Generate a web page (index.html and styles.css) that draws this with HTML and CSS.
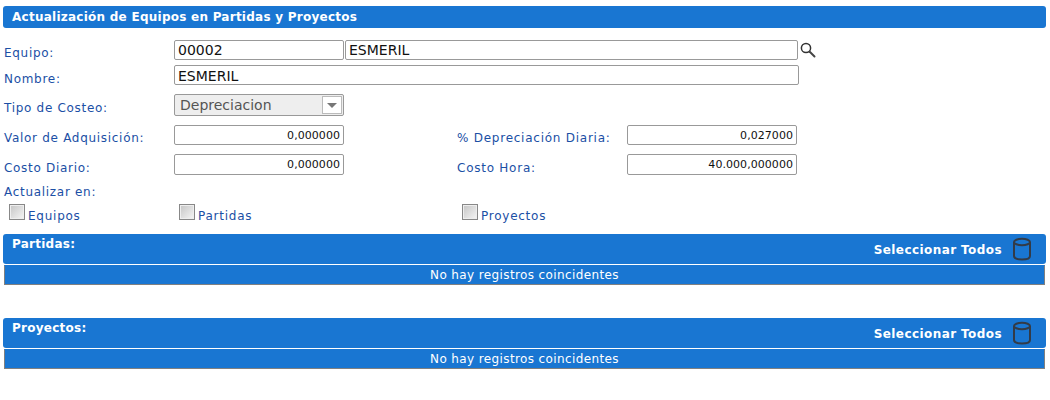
FILE: index.html
```html
<!DOCTYPE html>
<html lang="es">
<head>
    <meta charset="UTF-8">
    <title>Actualización de Equipos</title>
    <link rel="stylesheet" href="styles.css">
</head>
<body>
    <div class="titulo">Actualización de Equipos en Partidas y Proyectos</div>

    <div class="fila fila-equipo">
        <label class="etiqueta">Equipo:</label>
        <input class="campo campo-codigo" type="text" value="00002">
        <input class="campo campo-desc" type="text" value="ESMERIL">
        <svg class="lupa" width="18" height="18" viewBox="0 0 18 18">
            <circle cx="7" cy="7" r="4.6" fill="none" stroke="#333" stroke-width="1.5"/>
            <path d="M10.5 10.5 L15.5 15.5" stroke="#444" stroke-width="2" stroke-linecap="round"/>
        </svg>
    </div>

    <div class="fila fila-nombre">
        <label class="etiqueta">Nombre:</label>
        <input class="campo campo-nombre" type="text" value="ESMERIL">
    </div>

    <div class="fila fila-tipo">
        <label class="etiqueta">Tipo de Costeo:</label>
        <div class="combo">
            <span class="combo-texto">Depreciacion</span>
            <span class="combo-boton"><span class="flecha"></span></span>
        </div>
    </div>

    <div class="fila fila-valor">
        <label class="etiqueta">Valor de Adquisición:</label>
        <input class="campo campo-num" type="text" value="0,000000">
        <label class="etiqueta-der">% Depreciación Diaria:</label>
        <input class="campo campo-num" type="text" value="0,027000">
    </div>

    <div class="fila fila-costo">
        <label class="etiqueta">Costo Diario:</label>
        <input class="campo campo-num" type="text" value="0,000000">
        <label class="etiqueta-der">Costo Hora:</label>
        <input class="campo campo-num" type="text" value="40.000,000000">
    </div>

    <div class="actualizar">Actualizar en:</div>
    <div class="checks">
        <div class="check check-equipos"><span class="caja"></span>Equipos</div>
        <div class="check check-partidas"><span class="caja"></span>Partidas</div>
        <div class="check"><span class="caja"></span>Proyectos</div>
    </div>

    <div class="seccion">
        <span class="seccion-titulo">Partidas:</span>
        <span class="seleccionar">Seleccionar Todos</span>
        <svg class="cilindro" width="20" height="24" viewBox="0 0 20 24">
            <ellipse cx="10" cy="5" rx="8" ry="3.2" fill="none" stroke="#333b47" stroke-width="2"/>
            <path d="M2 5 V19 C2 21 5 22.5 10 22.5 C15 22.5 18 21 18 19 V5" fill="none" stroke="#333b47" stroke-width="2"/>
        </svg>
    </div>
    <div class="vacio">No hay registros coincidentes</div>

    <div class="seccion seccion-proyectos">
        <span class="seccion-titulo">Proyectos:</span>
        <span class="seleccionar">Seleccionar Todos</span>
        <svg class="cilindro" width="20" height="24" viewBox="0 0 20 24">
            <ellipse cx="10" cy="5" rx="8" ry="3.2" fill="none" stroke="#333b47" stroke-width="2"/>
            <path d="M2 5 V19 C2 21 5 22.5 10 22.5 C15 22.5 18 21 18 19 V5" fill="none" stroke="#333b47" stroke-width="2"/>
        </svg>
    </div>
    <div class="vacio">No hay registros coincidentes</div>
</body>
</html>
```

FILE: styles.css
```css
body {
    margin: 0;
    padding: 6px 4px 0 3px;
    font-family: "DejaVu Sans", Verdana, sans-serif;
    font-size: 12px;
    color: #1b4fa5;
    background-color: white;
}

.titulo {
    height: 22px;
    line-height: 23px;
    padding-left: 9px;
    background-color: #1976d2;
    border-radius: 3px;
    color: white;
    font-weight: bold;
    font-size: 12px;
    letter-spacing: 0.25px;
}

.fila {
    display: flex;
    align-items: center;
    padding-left: 1px;
}

.fila-equipo { margin-top: 12px; height: 20px; }
.fila-nombre { margin-top: 5px; height: 20px; }
.fila-tipo { margin-top: 9px; height: 22px; }
.fila-valor { margin-top: 9px; height: 20px; }
.fila-costo { margin-top: 9px; height: 21px; }

.etiqueta {
    width: 170px;
    padding-top: 6px;
    letter-spacing: 0.7px;
}

.fila-nombre .etiqueta {
    padding-top: 8px;
}

.etiqueta-der {
    width: 170px;
    margin-left: 113px;
    padding-top: 6px;
    letter-spacing: 0.75px;
}

.campo {
    box-sizing: border-box;
    height: 100%;
    margin: 0;
    padding: 0 4px 0 3px;
    border: 1px solid #999;
    border-radius: 2px;
    outline: none;
    background-color: white;
    color: #111;
    font-family: "DejaVu Sans", Verdana, sans-serif;
    font-size: 14px;
}

.campo-codigo { width: 170px; }
.campo-desc { width: 453px; margin-left: 1px; }
.campo-nombre { width: 625px; padding-top: 2px; }

.campo-num {
    width: 170px;
    padding-right: 3px;
    text-align: right;
    font-size: 11px;
    letter-spacing: 0.05px;
}

.lupa {
    margin-left: 1px;
}

.combo {
    box-sizing: border-box;
    display: flex;
    align-items: center;
    justify-content: space-between;
    width: 170px;
    height: 100%;
    padding: 0 1px 0 5px;
    background-color: #eeeeee;
    border: 1px solid #999;
    border-radius: 2px;
    color: #555;
    font-size: 14px;
}

.combo-boton {
    box-sizing: border-box;
    display: flex;
    align-items: center;
    justify-content: center;
    width: 20px;
    height: 18px;
    background-color: white;
    border: 1px solid #bbb;
}

.flecha {
    width: 0;
    height: 0;
    border-left: 5px solid transparent;
    border-right: 5px solid transparent;
    border-top: 5px solid #777;
}

.actualizar {
    margin-top: 10px;
    padding-left: 1px;
    letter-spacing: 0.7px;
    line-height: 15px;
}

.checks {
    display: flex;
    height: 20px;
    margin-top: 3px;
    padding-left: 6px;
}

.check {
    display: flex;
    align-items: flex-end;
    letter-spacing: 0.75px;
}

.check-equipos { width: 170px; }
.check-partidas { width: 283px; }

.caja {
    box-sizing: border-box;
    width: 16px;
    height: 16px;
    margin: 0 3px 3px 0;
    border: 1px solid #888;
    outline: 1px solid #eee;
    outline-offset: -2px;
    background: linear-gradient(135deg, #c4c4c4, #f6f6f6);
}

.seccion {
    display: flex;
    align-items: flex-start;
    height: 30px;
    margin-top: 11px;
    padding: 0 14px 0 9px;
    box-sizing: border-box;
    background-color: #1976d2;
    border-radius: 3px;
    color: white;
    font-weight: bold;
    font-size: 12px;
    letter-spacing: 0.25px;
}

.seccion-proyectos { margin-top: 33px; }

.seccion-titulo {
    flex: 1;
    padding-top: 3px;
}

.seleccionar {
    padding-top: 9px;
    letter-spacing: 0.42px;
}

.cilindro {
    margin: 3px 0 0 10px;
}

.vacio {
    box-sizing: border-box;
    height: 20px;
    line-height: 19px;
    margin: 1px 1px 0;
    background-color: #1976d2;
    border: 1px solid #808080;
    border-top-color: #1976d2;
    color: white;
    text-align: center;
    font-size: 12px;
    letter-spacing: 0.38px;
}
```
